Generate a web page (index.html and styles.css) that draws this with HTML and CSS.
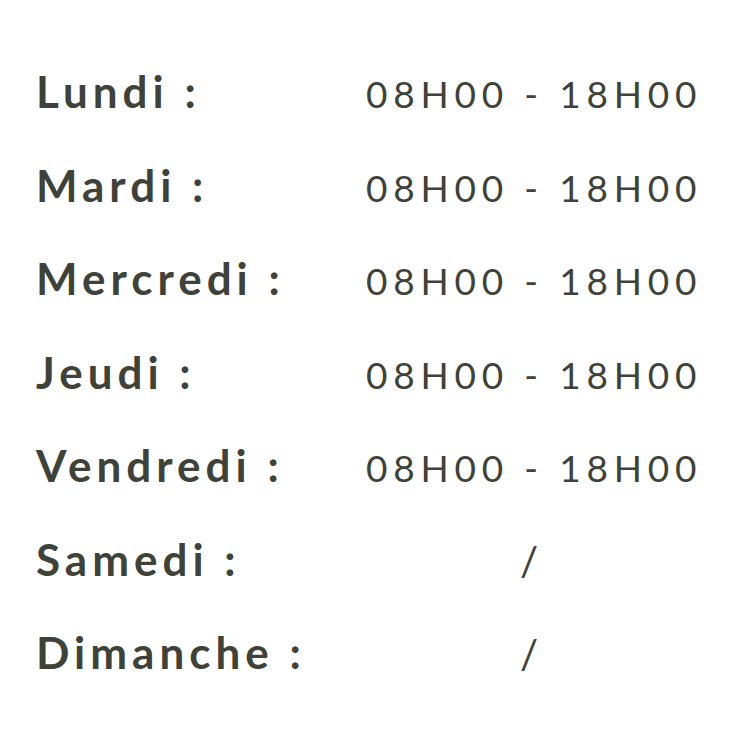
FILE: index.html
```html
<!DOCTYPE html>
<html lang="fr"><head><meta charset="utf-8"><link rel="stylesheet" href="styles.css"></head>
<body>
<div class="hours">
  <div class="row"><span class="day">Lundi :</span><span class="time">08H00 - 18H00</span></div>
  <div class="row"><span class="day">Mardi :</span><span class="time">08H00 - 18H00</span></div>
  <div class="row"><span class="day">Mercredi :</span><span class="time">08H00 - 18H00</span></div>
  <div class="row"><span class="day">Jeudi :</span><span class="time">08H00 - 18H00</span></div>
  <div class="row"><span class="day">Vendredi :</span><span class="time">08H00 - 18H00</span></div>
  <div class="row"><span class="day">Samedi :</span><span class="time slash">/</span></div>
  <div class="row"><span class="day">Dimanche :</span><span class="time slash">/</span></div>
</div>
</body></html>
```
FILE: styles.css
```css
html,body{margin:0;padding:0;background:#fff}
body{color:#3f4239;font-family:Lato,"Liberation Sans",sans-serif}
.hours{padding:45px 52px 0 36px;display:flex;flex-direction:column}
.row{display:flex;align-items:baseline;height:93.5px;line-height:93.5px}
.day{width:330px;flex:none;font-size:44px;font-weight:700;letter-spacing:5px;white-space:nowrap}
.time{width:332px;flex:none;text-align:center;font-size:37px;font-weight:400;letter-spacing:5.8px;white-space:nowrap}
.slash{font-size:40px}
```
